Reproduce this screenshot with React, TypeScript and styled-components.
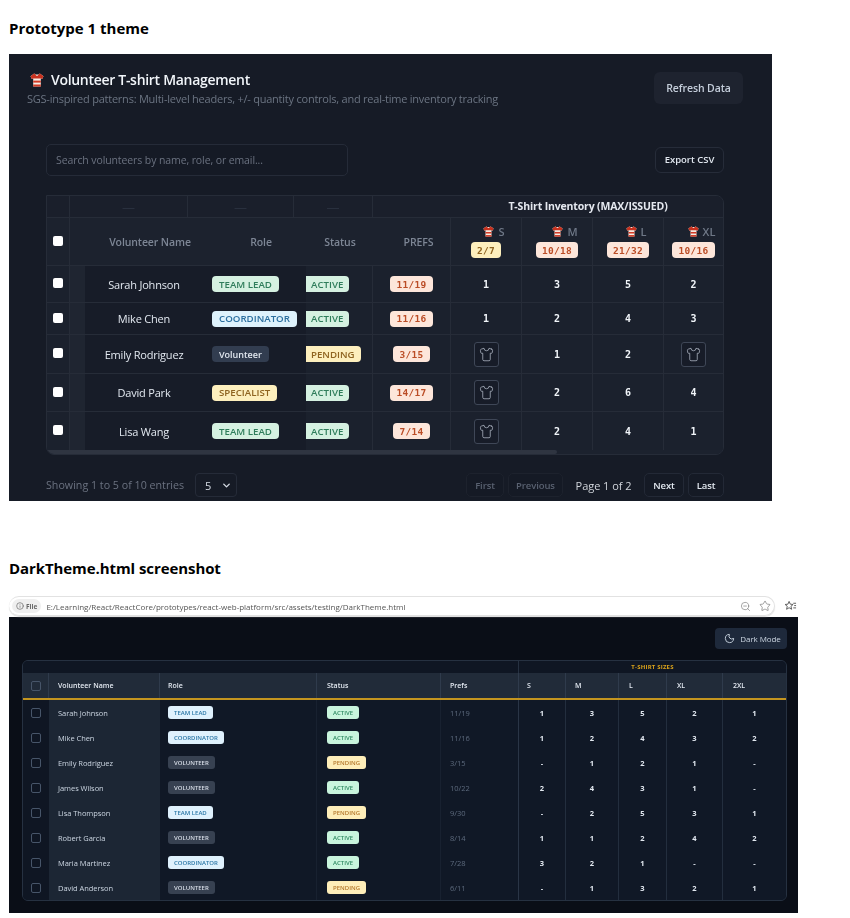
import React from "react";
import styled, { createGlobalStyle } from "styled-components";
import { ChevronDown, Info, Moon, Shirt, Star, ZoomOut } from "lucide-react";

const GlobalStyle = createGlobalStyle`
  html, body {
    margin: 0;
    background: #fff;
  }
  body {
    font-family: "Open Sans", "Noto Sans", sans-serif;
  }
  * {
    box-sizing: border-box;
  }
`;

const MONO = `"DejaVu Sans Mono", "Liberation Mono", monospace`;

const SIZES = [
  { label: "S", count: "2/7", tone: "yellow" },
  { label: "M", count: "10/18", tone: "orange" },
  { label: "L", count: "21/32", tone: "orange" },
  { label: "XL", count: "10/16", tone: "orange" },
];

const VOLUNTEERS = [
  { name: "Sarah Johnson", role: "TEAM LEAD", tone: "green", status: "ACTIVE", prefs: "11/19", qty: [1, 3, 5, 2], height: 37 },
  { name: "Mike Chen", role: "COORDINATOR", tone: "blue", status: "ACTIVE", prefs: "11/16", qty: [1, 2, 4, 3], height: 32 },
  { name: "Emily Rodriguez", role: "Volunteer", tone: "slate", status: "PENDING", prefs: "3/15", qty: [null, 1, 2, null], height: 39 },
  { name: "David Park", role: "SPECIALIST", tone: "yellow", status: "ACTIVE", prefs: "14/17", qty: [null, 2, 6, 4], height: 38 },
  { name: "Lisa Wang", role: "TEAM LEAD", tone: "green", status: "ACTIVE", prefs: "7/14", qty: [null, 2, 4, 1], height: 38 },
];

const DARK_ROWS = [
  ["Sarah Johnson", "TEAM LEAD", "ACTIVE", "11/19", "1", "3", "5", "2", "1"],
  ["Mike Chen", "COORDINATOR", "ACTIVE", "11/16", "1", "2", "4", "3", "2"],
  ["Emily Rodriguez", "VOLUNTEER", "PENDING", "3/15", "-", "1", "2", "1", "-"],
  ["James Wilson", "VOLUNTEER", "ACTIVE", "10/22", "2", "4", "3", "1", "-"],
  ["Lisa Thompson", "TEAM LEAD", "PENDING", "9/30", "-", "2", "5", "3", "1"],
  ["Robert Garcia", "VOLUNTEER", "ACTIVE", "8/14", "1", "1", "2", "4", "2"],
  ["Maria Martinez", "COORDINATOR", "ACTIVE", "7/28", "3", "2", "1", "-", "-"],
  ["David Anderson", "VOLUNTEER", "PENDING", "6/11", "-", "1", "3", "2", "1"],
];

const TONES: Record<string, { bg: string; fg: string }> = {
  green: { bg: "#d5f1e1", fg: "#2f7d5b" },
  blue: { bg: "#def2fc", fg: "#2c6f9f" },
  slate: { bg: "#323d50", fg: "#e2e8f0" },
  yellow: { bg: "#fdefbd", fg: "#8f6420" },
  orange: { bg: "#fde6da", fg: "#bb4d26" },
};

// striped tee, the emoji next to the title and the size labels
const RunningShirt = ({ size = 14 }: { size?: number }) => (
  <svg width={size} height={size} viewBox="0 0 14 14" aria-hidden="true">
    <path d="M4.200.5l1.300.9h3l1.300-.9 3.700 2.700-1.300 2.800-1.400-.6V13.500H3.200V5.400L1.800 6 .5 3.200z" fill="#f6eee6" />
    <path d="M4.200.5l1.300.9c.3.900.8 1.300 1.500 1.300s1.200-.4 1.500-1.300L9.800.5l3.700 2.700-1.300 2.800-1.400-.6H3.200L1.800 6 .5 3.200z" fill="#c8321f" />
    <rect x="3.200" y="7.600" width="7.600" height="2" fill="#d23b26" />
    <rect x="3.200" y="11.500" width="7.600" height="2" fill="#d23b26" />
  </svg>
);

const BookmarksIcon = () => (
  <svg width="13" height="13" viewBox="0 0 14 14" fill="none" stroke="#555" strokeWidth="1" aria-hidden="true">
    <path d="M5.500 1.500l1.300 3 3 .3-2.300 2 .7 3.200-2.700-1.700L2.800 10l.7-3.200-2.300-2 3-.3z" />
    <path d="M10 3.500h3M11 6h2M10 8.500h3" />
  </svg>
);

export default function App() {
  return (
    <>
      <GlobalStyle />
      <PageTitle>Prototype 1 theme</PageTitle>
      <Prototype>
        <ProtoHeader>
          <div>
            <ProtoTitle>
              <RunningShirt />
              Volunteer T-shirt Management
            </ProtoTitle>
            <ProtoSubtitle>
              SGS-inspired patterns: Multi-level headers, +/- quantity controls, and real-time inventory tracking
            </ProtoSubtitle>
          </div>
          <RefreshButton>Refresh Data</RefreshButton>
        </ProtoHeader>
        <ProtoBody>
          <Toolbar>
            <SearchInput placeholder="Search volunteers by name, role, or email..." />
            <ExportButton>Export CSV</ExportButton>
          </Toolbar>
          <ProtoTable>
            <GroupRow>
              <GroupCell />
              <GroupCell>—</GroupCell>
              <GroupCell>—</GroupCell>
              <GroupCell>—</GroupCell>
              <GroupTitle>T-Shirt Inventory (MAX/ISSUED)</GroupTitle>
            </GroupRow>
            <ColumnRow>
              <CheckCell>
                <Check type="checkbox" />
              </CheckCell>
              <ColumnLabel $pad={15}>Volunteer Name</ColumnLabel>
              <ColumnLabel>Role</ColumnLabel>
              <ColumnLabel>Status</ColumnLabel>
              <ColumnLabel $pad={14} $bordered>
                PREFS
              </ColumnLabel>
              {SIZES.map((size) => (
                <SizeHead key={size.label}>
                  <SizeName>
                    <RunningShirt size={11} />
                    {size.label}
                  </SizeName>
                  <MonoBadge $tone={size.tone}>{size.count}</MonoBadge>
                </SizeHead>
              ))}
            </ColumnRow>
            {VOLUNTEERS.map((v, i) => (
              <BodyRow key={v.name} $height={v.height} $last={i === VOLUNTEERS.length - 1}>
                <CheckCell>
                  <Check type="checkbox" />
                </CheckCell>
                <PinnedStripe />
                <NameCell>{v.name}</NameCell>
                <RoleCell>
                  <Badge $tone={v.tone} $caps={v.role !== "Volunteer"}>
                    {v.role}
                  </Badge>
                </RoleCell>
                <StatusCell>
                  <StatusBadge $tone={v.status === "ACTIVE" ? "green" : "yellow"}>{v.status}</StatusBadge>
                </StatusCell>
                <QtyCell>
                  <MonoBadge $tone="orange">{v.prefs}</MonoBadge>
                </QtyCell>
                {v.qty.map((q, j) => (
                  <QtyCell key={j}>
                    {q === null ? (
                      <EmptyQty>
                        <Shirt size={15} strokeWidth={1.2} />
                      </EmptyQty>
                    ) : (
                      q
                    )}
                  </QtyCell>
                ))}
              </BodyRow>
            ))}
            <ScrollTrack>
              <ScrollThumb />
            </ScrollTrack>
          </ProtoTable>
          <Pager>
            <PagerInfo>Showing 1 to 5 of 10 entries</PagerInfo>
            <PageSize>
              5
              <ChevronDown size={11} strokeWidth={3} />
            </PageSize>
            <PagerButtons>
              <PageButton $width={38} disabled>
                First
              </PageButton>
              <PageButton $width={55} disabled>
                Previous
              </PageButton>
              <PageLabel>Page 1 of 2</PageLabel>
              <PageButton $width={40}>Next</PageButton>
              <PageButton $width={36}>Last</PageButton>
            </PagerButtons>
          </Pager>
        </ProtoBody>
      </Prototype>

      <SecondTitle>DarkTheme.html screenshot</SecondTitle>
      <Browser>
        <AddressBar>
          <AddressPill>
            <FileChip>
              <Info size={8} />
              File
            </FileChip>
            <Url>E:/Learning/React/ReactCore/prototypes/react-web-platform/src/assets/testing/DarkTheme.html</Url>
            <PillIcons>
              <ZoomOut size={11} strokeWidth={1.4} />
              <Star size={12} strokeWidth={1.4} />
            </PillIcons>
          </AddressPill>
          <BookmarksIcon />
        </AddressBar>
        <DarkPage>
          <DarkActions>
            <DarkModeButton>
              <Moon size={11} />
              Dark Mode
            </DarkModeButton>
          </DarkActions>
          <DarkTable>
            <DarkGroupRow>
              <DarkGroupBlank />
              <DarkGroupTitle>T-SHIRT SIZES</DarkGroupTitle>
            </DarkGroupRow>
            <DarkHeadRow>
              <DarkHead>
                <DarkCheck />
              </DarkHead>
              <DarkHead $pad={9}>Volunteer Name</DarkHead>
              <DarkHead $pad={8}>Role</DarkHead>
              <DarkHead $pad={10}>Status</DarkHead>
              <DarkHead $pad={9}>Prefs</DarkHead>
              <DarkHead $pad={8}>S</DarkHead>
              <DarkHead $pad={9}>M</DarkHead>
              <DarkHead $pad={10}>L</DarkHead>
              <DarkHead $pad={10}>XL</DarkHead>
              <DarkHead $pad={10}>2XL</DarkHead>
            </DarkHeadRow>
            {DARK_ROWS.map(([name, role, status, prefs, ...qty]) => (
              <DarkRow key={name}>
                <DarkCheckCell>
                  <DarkCheck />
                </DarkCheckCell>
                <DarkName>{name}</DarkName>
                <DarkCell $pad={8}>
                  <DarkBadge $tone={role === "VOLUNTEER" ? "slate" : "sky"}>{role}</DarkBadge>
                </DarkCell>
                <DarkCell $pad={10}>
                  <DarkBadge $tone={status === "ACTIVE" ? "mint" : "amber"}>{status}</DarkBadge>
                </DarkCell>
                <DarkPrefs>{prefs}</DarkPrefs>
                {qty.map((q, j) => (
                  <DarkQty key={j}>{q}</DarkQty>
                ))}
              </DarkRow>
            ))}
          </DarkTable>
        </DarkPage>
      </Browser>
    </>
  );
}

const PageTitle = styled.h2`
  margin: 0;
  height: 54px;
  padding: 18px 0 0 9px;
  font-size: 15px;
  line-height: 20px;
  font-weight: 700;
  color: #000;
`;

const Prototype = styled.section`
  width: 763px;
  height: 447px;
  margin-left: 9px;
  background: #161b26;
  overflow: hidden;
  filter: blur(0.25px);
`;

const ProtoHeader = styled.header`
  height: 90px;
  padding: 16px 29px 0 18px;
  display: flex;
  justify-content: space-between;
  align-items: flex-start;
`;

const ProtoTitle = styled.div`
  display: flex;
  align-items: center;
  gap: 7px;
  padding-left: 3px;
  font-size: 14px;
  line-height: 20px;
  font-weight: 600;
  letter-spacing: -0.3px;
  color: #f1f5f9;
`;

const ProtoSubtitle = styled.div`
  font-size: 11px;
  line-height: 18px;
  letter-spacing: -0.23px;
  color: #6b7482;
`;

const RefreshButton = styled.button`
  width: 89px;
  height: 32px;
  margin-top: 2px;
  border: 0;
  border-radius: 6px;
  background: #1e232f;
  font: 600 10.500px "Open Sans", sans-serif;
  letter-spacing: -0.1px;
  color: #c5cedb;
`;

const ProtoBody = styled.div`
  padding: 0 48px 0 37px;
`;

const Toolbar = styled.div`
  height: 31px;
  margin-bottom: 20px;
  display: flex;
  justify-content: space-between;
  align-items: center;
`;

const SearchInput = styled.input`
  width: 302px;
  height: 32px;
  padding: 0 10px 0 9px;
  border: 1px solid #252b38;
  border-radius: 5px;
  background: #151a25;
  font: 10.500px "Open Sans", sans-serif;
  letter-spacing: -0.1px;
  outline: none;
  &::placeholder {
    color: #6b7280;
    opacity: 1;
  }
`;

const ExportButton = styled.button`
  width: 69px;
  height: 26px;
  padding: 0;
  border: 1px solid #262c39;
  border-radius: 6px;
  background: #151a25;
  font: 600 9.500px "Open Sans", sans-serif;
  color: #e2e8f0;
`;

const ProtoTable = styled.div`
  width: 678px;
  border: 1px solid #262c38;
  border-radius: 0 8px 8px 8px;
  background: #1c222e;
  overflow: hidden;
`;

const GroupRow = styled.div`
  display: grid;
  grid-template-columns: 23px 118px 106px 79px 1fr;
  height: 22px;
  background: #1a1f2b;
  border-bottom: 1px solid #262c38;
`;

const GroupCell = styled.div`
  display: flex;
  justify-content: center;
  align-items: center;
  border-right: 1px solid #262c38;
  font-size: 13px;
  color: #2b3240;
`;

const GroupTitle = styled.div`
  padding-left: 80px;
  text-align: center;
  font-size: 10.500px;
  line-height: 21px;
  font-weight: 700;
  letter-spacing: -0.15px;
  color: #e5e9f0;
`;

const ColumnRow = styled.div`
  display: grid;
  grid-template-columns: 23px 145px 92px 66px 78px 71px 71px 71px 1fr;
  height: 48px;
  background: #1c222e;
  border-bottom: 1px solid #262c38;
`;

const CheckCell = styled.div`
  display: flex;
  justify-content: center;
  align-items: center;
  padding-right: 1px;
  border-right: 1px solid #262c38;
`;

const Check = styled.input`
  appearance: none;
  width: 10px;
  height: 10px;
  margin: 0 0 2px;
  border-radius: 2px;
  background: #fff;
`;

const ColumnLabel = styled.div<{ $pad?: number; $bordered?: boolean }>`
  display: flex;
  justify-content: center;
  align-items: center;
  padding-left: ${(p) => p.$pad ?? 0}px;
  border-right: ${(p) => (p.$bordered ? "1px solid #262c38" : "0")};
  font-size: 10.500px;
  font-weight: 600;
  letter-spacing: -0.1px;
  color: #7d8695;
`;

const SizeHead = styled.div`
  display: flex;
  flex-direction: column;
  align-items: center;
  padding-top: 5px;
  border-right: 1px solid #262c38;
  &:last-child {
    border-right: 0;
  }
`;

const SizeName = styled.div`
  display: flex;
  align-items: center;
  gap: 4px;
  height: 16px;
  margin-bottom: 3px;
  padding-left: 16px;
  white-space: nowrap;
  font-size: 11px;
  font-weight: 600;
  color: #6f7887;
`;

const Badge = styled.span<{ $tone: string; $caps?: boolean }>`
  display: inline-flex;
  align-items: center;
  height: 16px;
  padding: 0 7px;
  border-radius: 4px;
  background: ${(p) => TONES[p.$tone].bg};
  color: ${(p) => TONES[p.$tone].fg};
  font-size: ${(p) => (p.$caps ? "9.700px" : "9px")};
  font-weight: 600;
  white-space: nowrap;
`;

const StatusBadge = styled(Badge)`
  padding: 0 6px 0 5px;
  border-radius: 0 4px 4px 0;
  font-size: 9.700px;
`;

const MonoBadge = styled.span<{ $tone: string }>`
  display: inline-flex;
  align-items: center;
  height: 16px;
  padding: 0 6px;
  border-radius: 4px;
  background: ${(p) => TONES[p.$tone].bg};
  color: ${(p) => TONES[p.$tone].fg};
  font: 700 9.500px ${MONO};
  letter-spacing: 0.3px;
`;

const BodyRow = styled.div<{ $height: number; $last?: boolean }>`
  display: grid;
  grid-template-columns: 23px 15px 118px 103px 67px 78px 71px 71px 71px 1fr;
  height: ${(p) => p.$height}px;
  background: #1b212d;
  border-bottom: ${(p) => (p.$last ? "0" : "1px solid #262c38")};
`;

const PinnedStripe = styled.div`
  background: #1f2531;
`;

const NameCell = styled.div`
  display: flex;
  justify-content: center;
  align-items: center;
  background: #171c28;
  font-size: 11px;
  letter-spacing: -0.2px;
  color: #e2e8f0;
  white-space: nowrap;
`;

const RoleCell = styled.div`
  display: flex;
  align-items: center;
  padding-left: 9px;
  background: #171c28;
`;

const StatusCell = styled.div`
  display: flex;
  align-items: center;
  border-right: 1px solid #262c38;
`;

const QtyCell = styled.div`
  display: flex;
  justify-content: center;
  align-items: center;
  border-right: 1px solid #262c38;
  font: 700 10px ${MONO};
  color: #f1f5f9;
  &:last-child {
    border-right: 0;
  }
`;

const EmptyQty = styled.span`
  display: flex;
  justify-content: center;
  align-items: center;
  width: 25px;
  height: 25px;
  border: 1.500px solid #3f4757;
  border-radius: 3px;
  background: #171c28;
  color: #b4bcc9;
`;

const ScrollTrack = styled.div`
  height: 4px;
  background: #1c222e;
`;

const ScrollThumb = styled.div`
  width: 510px;
  height: 100%;
  background: #2f3541;
  border-radius: 0 2px 2px 0;
`;

const Pager = styled.div`
  height: 24px;
  margin-top: 18px;
  width: 678px;
  display: flex;
  align-items: center;
`;

const PagerInfo = styled.span`
  width: 149px;
  font-size: 10.700px;
  color: #6b7280;
  white-space: nowrap;
`;

const PageSize = styled.div`
  width: 42px;
  height: 24px;
  padding: 0 4px 0 9px;
  display: flex;
  justify-content: space-between;
  align-items: center;
  border: 1px solid #252b38;
  border-radius: 4px;
  font-size: 11px;
  color: #d5dbe4;
`;

const PagerButtons = styled.div`
  margin-left: auto;
  display: flex;
  align-items: center;
  gap: 4px;
`;

const PageButton = styled.button<{ $width: number }>`
  width: ${(p) => p.$width}px;
  height: 24px;
  padding: 0;
  border: 1px solid ${(p) => (p.disabled ? "#1d222d" : "#232936")};
  border-radius: 5px;
  background: #151a25;
  font: 600 9.500px "Open Sans", sans-serif;
  letter-spacing: -0.1px;
  color: ${(p) => (p.disabled ? "#596170" : "#e2e8f0")};
`;

const PageLabel = styled.span`
  width: 73px;
  text-align: center;
  font-size: 11px;
  letter-spacing: -0.05px;
  color: #d1d5db;
  white-space: nowrap;
`;

const SecondTitle = styled(PageTitle)`
  height: 94px;
  padding-top: 57px;
  letter-spacing: -0.08px;
`;

const Browser = styled.section`
  width: 789px;
  margin-left: 9px;
  filter: blur(0.35px);
`;

const AddressBar = styled.div`
  height: 22px;
  display: flex;
  align-items: center;
  background: #fff;
  padding-right: 1px;
  gap: 9px;
`;

const AddressPill = styled.div`
  flex: 1;
  height: 20px;
  padding: 0 3px 0 3px;
  display: flex;
  align-items: center;
  border: 1px solid #e2e2e2;
  border-left: 0;
  border-radius: 10px;
  box-shadow: 0 1px 1px #ddd;
`;

const FileChip = styled.span`
  display: flex;
  align-items: center;
  gap: 2px;
  height: 14px;
  padding: 0 4px;
  border-radius: 7px;
  background: #efefef;
  font-size: 6.500px;
  font-weight: 700;
  color: #666;
`;

const Url = styled.span`
  margin-left: 5px;
  font-size: 8px;
  color: #555;
  white-space: nowrap;
`;

const PillIcons = styled.span`
  margin-left: auto;
  display: flex;
  align-items: center;
  gap: 8px;
  color: #777;
`;

const DarkPage = styled.div`
  height: 296px;
  padding: 11px 11px 0 13px;
  background: #0a0e17;
`;

const DarkActions = styled.div`
  display: flex;
  justify-content: flex-end;
  margin-bottom: 11px;
`;

const DarkModeButton = styled.button`
  width: 72px;
  height: 21px;
  padding: 0 0 0 3px;
  display: flex;
  justify-content: center;
  align-items: center;
  gap: 5px;
  border: 0;
  border-radius: 4px;
  background: #1e293b;
  font: 8px "Open Sans", sans-serif;
  letter-spacing: -0.1px;
  color: #cbd5e1;
`;

const DarkTable = styled.div`
  width: 765px;
  height: 241px;
  border: 1px solid #263141;
  border-radius: 6px;
  background: #101826;
  overflow: hidden;
`;

const DARK_COLUMNS = "26px 111px 157px 124px 78px 47px 53px 48px 56px 1fr";

const DarkGroupRow = styled.div`
  display: grid;
  grid-template-columns: 496px 1fr;
  height: 12px;
  background: #0f1623;
`;

const DarkGroupBlank = styled.div`
  border-right: 1px solid #263141;
`;

const DarkGroupTitle = styled.div`
  text-align: center;
  font-size: 6px;
  line-height: 12px;
  font-weight: 700;
  letter-spacing: 0.2px;
  color: #d9a21b;
`;

const DarkHeadRow = styled.div`
  display: grid;
  grid-template-columns: ${DARK_COLUMNS};
  height: 27px;
  background: #212b39;
  border-bottom: 2px solid #c4951f;
`;

const DarkHead = styled.div<{ $pad?: number }>`
  display: flex;
  align-items: center;
  justify-content: ${(p) => (p.$pad ? "flex-start" : "center")};
  padding-left: ${(p) => p.$pad ?? 0}px;
  border-right: 1px solid #2f3b4c;
  font-size: 7px;
  font-weight: 600;
  color: #e2e8f0;
  &:last-child {
    border-right: 0;
  }
`;

const DarkRow = styled.div`
  display: grid;
  grid-template-columns: ${DARK_COLUMNS};
  height: 25px;
  background: #101826;
`;

const DarkCheckCell = styled.div`
  display: flex;
  justify-content: center;
  align-items: center;
  background: #0f1623;
`;

const DarkCheck = styled.span`
  display: block;
  width: 10px;
  height: 10px;
  border: 1px solid #475569;
  border-radius: 2px;
`;

const DarkName = styled.div`
  display: flex;
  align-items: center;
  padding-left: 9px;
  background: #1c2634;
  font-size: 7.500px;
  letter-spacing: -0.05px;
  color: #cbd5e1;
  white-space: nowrap;
`;

const DarkCell = styled.div<{ $pad: number }>`
  display: flex;
  align-items: center;
  padding-left: ${(p) => p.$pad}px;
  border-right: 1px solid #182130;
`;

const DARK_TONES: Record<string, { bg: string; fg: string }> = {
  sky: { bg: "#dff1fd", fg: "#2b77a6" },
  slate: { bg: "#374151", fg: "#d8dee8" },
  mint: { bg: "#c9f5dd", fg: "#2f8a62" },
  amber: { bg: "#feeeb9", fg: "#b4782c" },
};

const DarkBadge = styled.span<{ $tone: string }>`
  display: inline-flex;
  align-items: center;
  height: 13px;
  padding: 0 6px;
  border-radius: 3px;
  background: ${(p) => DARK_TONES[p.$tone].bg};
  color: ${(p) => DARK_TONES[p.$tone].fg};
  font-size: 6px;
  font-weight: 600;
  white-space: nowrap;
`;

const DarkPrefs = styled.div`
  display: flex;
  align-items: center;
  padding-left: 9px;
  border-right: 1px solid #2a3546;
  font-size: 7.500px;
  color: #5d6a7d;
`;

const DarkQty = styled.div`
  display: flex;
  justify-content: center;
  align-items: center;
  border-right: 1px solid #232e3e;
  font-size: 7.500px;
  font-weight: 700;
  color: #e2e8f0;
  &:last-child {
    border-right: 0;
  }
`;
